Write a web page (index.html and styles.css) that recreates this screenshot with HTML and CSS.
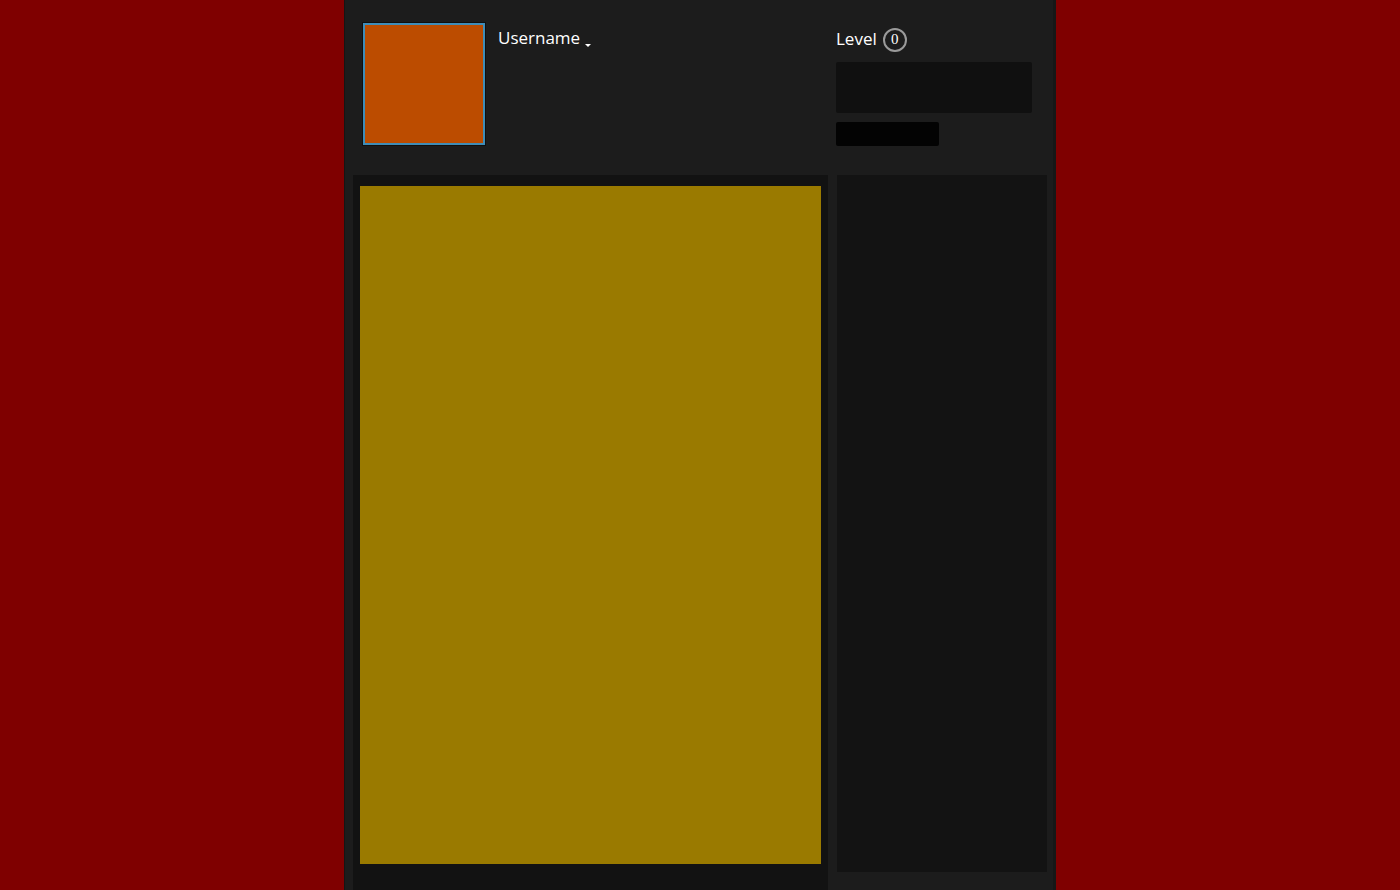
FILE: index.html
```html
<!DOCTYPE html>
<html>
<head>
<meta charset="utf-8">
<link rel="stylesheet" href="styles.css">
</head>
<body>
<div class="panel">
  <header class="header">
    <div class="avatar"></div>
    <div class="user">
      <span class="username">Username</span><span class="caret"></span>
    </div>
    <div class="level-block">
      <div class="level-row"><span class="level">Level</span><span class="badge">0</span></div>
      <div class="xp-box"></div>
      <div class="xp-small"></div>
    </div>
  </header>
  <div class="content">
    <main class="main">
      <div class="feature"></div>
    </main>
    <aside class="sidebar"></aside>
  </div>
</div>
</body>
</html>
```
FILE: styles.css
```css
html, body {
  margin: 0;
  padding: 0;
  height: 100%;
}
body {
  background: #7f0000;
  overflow: hidden;
  font-family: "Open Sans", "Noto Sans", sans-serif;
}
.panel {
  width: 712px;
  margin-left: 344px;
  height: 890px;
  background: #1c1c1c;
  box-sizing: border-box;
  border-left: 1px solid #151515;
  border-right: 3px solid #171717;
}
.header {
  display: flex;
  height: 175px;
  box-sizing: border-box;
  padding: 22px 21px 0 17px;
}
.avatar {
  width: 118px;
  height: 118px;
  background: #bc4c00;
  border: 2px solid #3f8db8;
  outline: 1px solid #0f0f0f;
  margin-top: 1px;
  margin-left: 1px;
  flex: none;
}
.user {
  flex: 1;
  margin-left: 13px;
  color: #fff;
}
.username {
  font-size: 17px;
  line-height: 32px;
}
.caret {
  display: inline-block;
  width: 0;
  height: 0;
  border-left: 3px solid transparent;
  border-right: 3px solid transparent;
  border-top: 3px solid #fff;
  margin-left: 5px;
  vertical-align: -3px;
}
.level-block {
  width: 196px;
  flex: none;
}
.level-row {
  display: flex;
  align-items: center;
  height: 32px;
  color: #fff;
}
.level {
  font-size: 17px;
}
.badge {
  width: 20px;
  height: 20px;
  border: 2px solid #9a9a9a;
  border-radius: 50%;
  margin-left: 6px;
  display: flex;
  align-items: center;
  justify-content: center;
  font-family: "Liberation Serif", serif;
  font-size: 15px;
  color: #fff;
  margin-top: 3px;
}
.xp-box {
  margin-top: 8px;
  height: 51px;
  background: #101010;
  border-radius: 2px;
}
.xp-small {
  margin-top: 9px;
  width: 103px;
  height: 24px;
  background: #030303;
  border-radius: 2px;
}
.content {
  display: flex;
  padding: 0 6px 0 8px;
  gap: 9px;
}
.main {
  width: 475px;
  height: 715px;
  background: #121212;
  padding: 11px 7px 0 7px;
  box-sizing: border-box;
}
.feature {
  height: 678px;
  background: #9a7a00;
}
.sidebar {
  width: 210px;
  height: 697px;
  background: #131313;
}
```
